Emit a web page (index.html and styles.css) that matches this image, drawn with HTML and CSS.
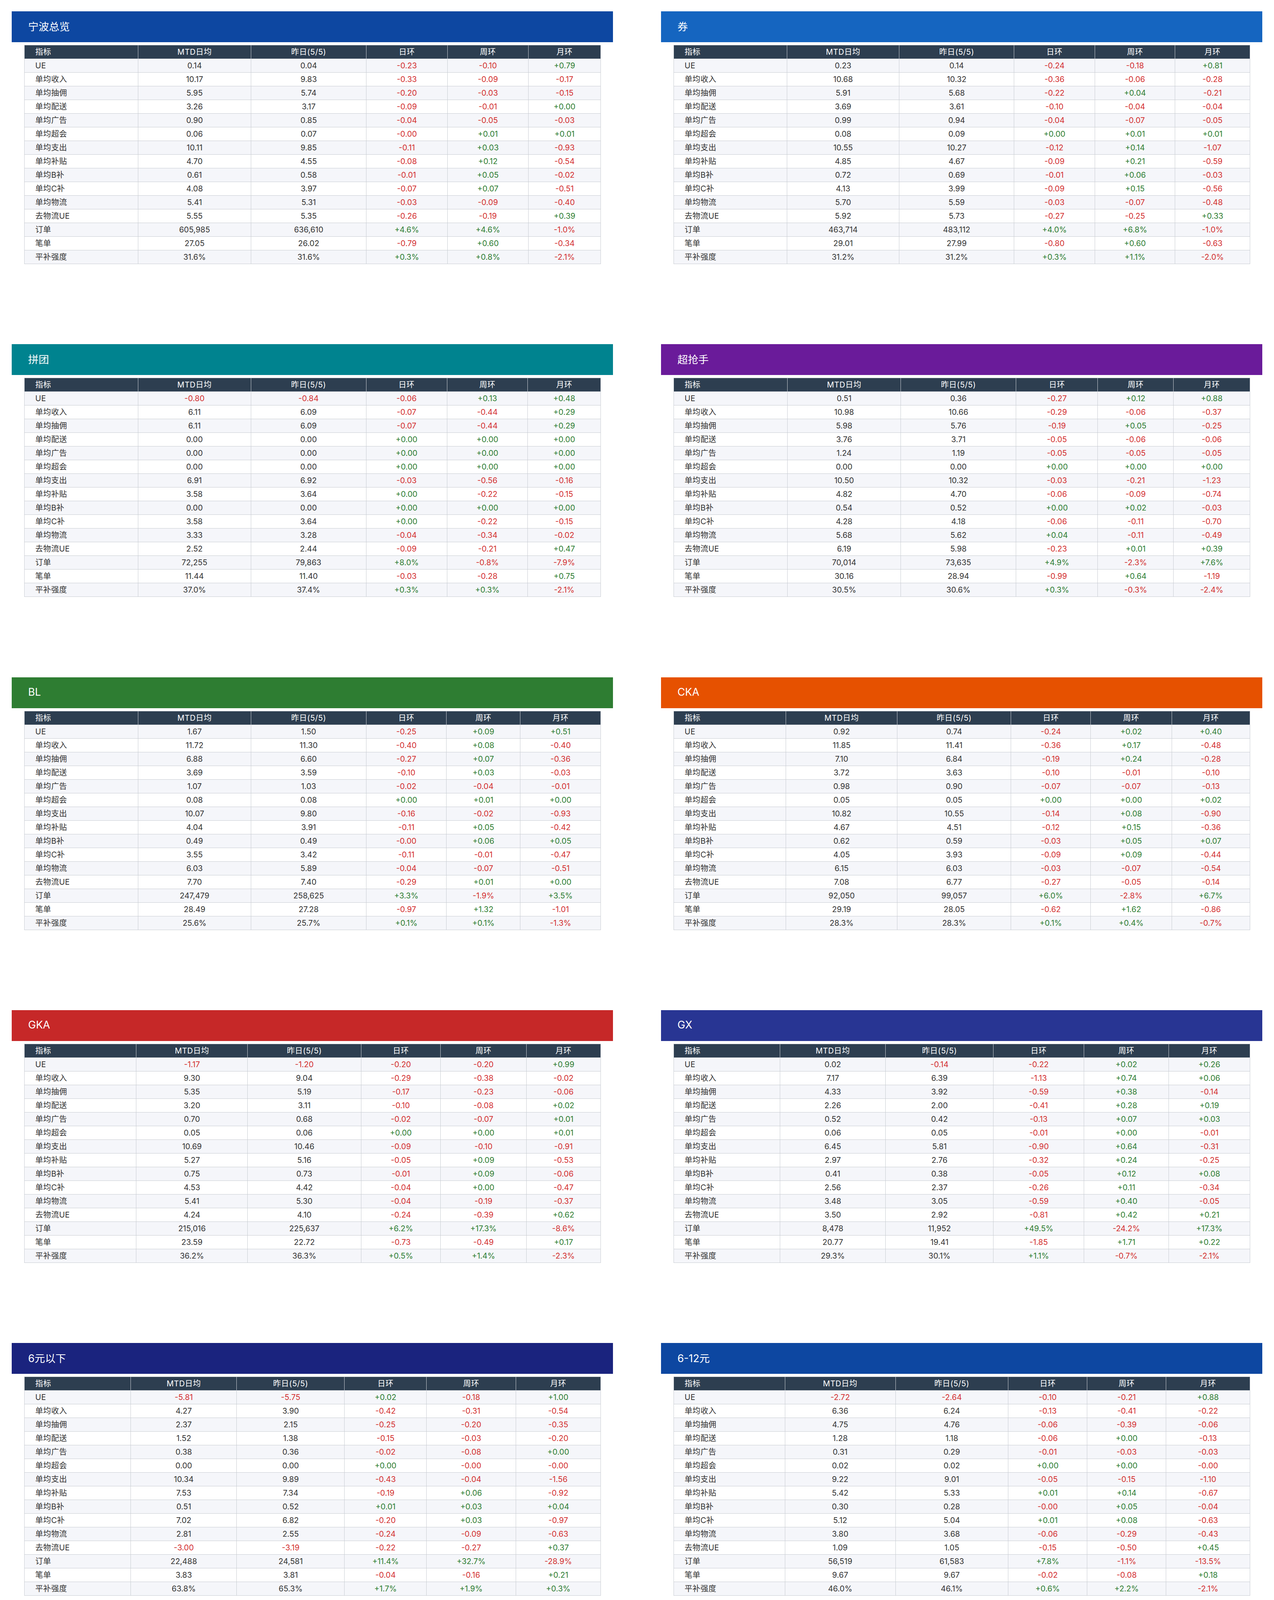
FILE: index.html
```html
<!DOCTYPE html>
<html lang="zh-CN">
<head>
<meta charset="utf-8">
<title>宁波 UE 日报</title>
<link rel="stylesheet" href="styles.css">
</head>
<body>
<main class="grid">

<section class="card">
<h2 class="card-title t-blue9">宁波总览</h2>
<table class="metrics">
<thead><tr><th>指标</th><th>MTD日均</th><th>昨日(5/5)</th><th>日环</th><th>周环</th><th>月环</th></tr></thead>
<tbody>
<tr><td>UE</td><td>0.14</td><td>0.04</td><td class="dn">-0.23</td><td class="dn">-0.10</td><td class="up">+0.79</td></tr>
<tr><td>单均收入</td><td>10.17</td><td>9.83</td><td class="dn">-0.33</td><td class="dn">-0.09</td><td class="dn">-0.17</td></tr>
<tr><td>单均抽佣</td><td>5.95</td><td>5.74</td><td class="dn">-0.20</td><td class="dn">-0.03</td><td class="dn">-0.15</td></tr>
<tr><td>单均配送</td><td>3.26</td><td>3.17</td><td class="dn">-0.09</td><td class="dn">-0.01</td><td class="up">+0.00</td></tr>
<tr><td>单均广告</td><td>0.90</td><td>0.85</td><td class="dn">-0.04</td><td class="dn">-0.05</td><td class="dn">-0.03</td></tr>
<tr><td>单均超会</td><td>0.06</td><td>0.07</td><td class="dn">-0.00</td><td class="up">+0.01</td><td class="up">+0.01</td></tr>
<tr><td>单均支出</td><td>10.11</td><td>9.85</td><td class="dn">-0.11</td><td class="up">+0.03</td><td class="dn">-0.93</td></tr>
<tr><td>单均补贴</td><td>4.70</td><td>4.55</td><td class="dn">-0.08</td><td class="up">+0.12</td><td class="dn">-0.54</td></tr>
<tr><td>单均B补</td><td>0.61</td><td>0.58</td><td class="dn">-0.01</td><td class="up">+0.05</td><td class="dn">-0.02</td></tr>
<tr><td>单均C补</td><td>4.08</td><td>3.97</td><td class="dn">-0.07</td><td class="up">+0.07</td><td class="dn">-0.51</td></tr>
<tr><td>单均物流</td><td>5.41</td><td>5.31</td><td class="dn">-0.03</td><td class="dn">-0.09</td><td class="dn">-0.40</td></tr>
<tr><td>去物流UE</td><td>5.55</td><td>5.35</td><td class="dn">-0.26</td><td class="dn">-0.19</td><td class="up">+0.39</td></tr>
<tr><td>订单</td><td>605,985</td><td>636,610</td><td class="up">+4.6%</td><td class="up">+4.6%</td><td class="dn">-1.0%</td></tr>
<tr><td>笔单</td><td>27.05</td><td>26.02</td><td class="dn">-0.79</td><td class="up">+0.60</td><td class="dn">-0.34</td></tr>
<tr><td>平补强度</td><td>31.6%</td><td>31.6%</td><td class="up">+0.3%</td><td class="up">+0.8%</td><td class="dn">-2.1%</td></tr>
</tbody>
</table>
</section>

<section class="card">
<h2 class="card-title t-blue8">券</h2>
<table class="metrics">
<thead><tr><th>指标</th><th>MTD日均</th><th>昨日(5/5)</th><th>日环</th><th>周环</th><th>月环</th></tr></thead>
<tbody>
<tr><td>UE</td><td>0.23</td><td>0.14</td><td class="dn">-0.24</td><td class="dn">-0.18</td><td class="up">+0.81</td></tr>
<tr><td>单均收入</td><td>10.68</td><td>10.32</td><td class="dn">-0.36</td><td class="dn">-0.06</td><td class="dn">-0.28</td></tr>
<tr><td>单均抽佣</td><td>5.91</td><td>5.68</td><td class="dn">-0.22</td><td class="up">+0.04</td><td class="dn">-0.21</td></tr>
<tr><td>单均配送</td><td>3.69</td><td>3.61</td><td class="dn">-0.10</td><td class="dn">-0.04</td><td class="dn">-0.04</td></tr>
<tr><td>单均广告</td><td>0.99</td><td>0.94</td><td class="dn">-0.04</td><td class="dn">-0.07</td><td class="dn">-0.05</td></tr>
<tr><td>单均超会</td><td>0.08</td><td>0.09</td><td class="up">+0.00</td><td class="up">+0.01</td><td class="up">+0.01</td></tr>
<tr><td>单均支出</td><td>10.55</td><td>10.27</td><td class="dn">-0.12</td><td class="up">+0.14</td><td class="dn">-1.07</td></tr>
<tr><td>单均补贴</td><td>4.85</td><td>4.67</td><td class="dn">-0.09</td><td class="up">+0.21</td><td class="dn">-0.59</td></tr>
<tr><td>单均B补</td><td>0.72</td><td>0.69</td><td class="dn">-0.01</td><td class="up">+0.06</td><td class="dn">-0.03</td></tr>
<tr><td>单均C补</td><td>4.13</td><td>3.99</td><td class="dn">-0.09</td><td class="up">+0.15</td><td class="dn">-0.56</td></tr>
<tr><td>单均物流</td><td>5.70</td><td>5.59</td><td class="dn">-0.03</td><td class="dn">-0.07</td><td class="dn">-0.48</td></tr>
<tr><td>去物流UE</td><td>5.92</td><td>5.73</td><td class="dn">-0.27</td><td class="dn">-0.25</td><td class="up">+0.33</td></tr>
<tr><td>订单</td><td>463,714</td><td>483,112</td><td class="up">+4.0%</td><td class="up">+6.8%</td><td class="dn">-1.0%</td></tr>
<tr><td>笔单</td><td>29.01</td><td>27.99</td><td class="dn">-0.80</td><td class="up">+0.60</td><td class="dn">-0.63</td></tr>
<tr><td>平补强度</td><td>31.2%</td><td>31.2%</td><td class="up">+0.3%</td><td class="up">+1.1%</td><td class="dn">-2.0%</td></tr>
</tbody>
</table>
</section>

<section class="card">
<h2 class="card-title t-cyan8">拼团</h2>
<table class="metrics">
<thead><tr><th>指标</th><th>MTD日均</th><th>昨日(5/5)</th><th>日环</th><th>周环</th><th>月环</th></tr></thead>
<tbody>
<tr><td>UE</td><td class="dn">-0.80</td><td class="dn">-0.84</td><td class="dn">-0.06</td><td class="up">+0.13</td><td class="up">+0.48</td></tr>
<tr><td>单均收入</td><td>6.11</td><td>6.09</td><td class="dn">-0.07</td><td class="dn">-0.44</td><td class="up">+0.29</td></tr>
<tr><td>单均抽佣</td><td>6.11</td><td>6.09</td><td class="dn">-0.07</td><td class="dn">-0.44</td><td class="up">+0.29</td></tr>
<tr><td>单均配送</td><td>0.00</td><td>0.00</td><td class="up">+0.00</td><td class="up">+0.00</td><td class="up">+0.00</td></tr>
<tr><td>单均广告</td><td>0.00</td><td>0.00</td><td class="up">+0.00</td><td class="up">+0.00</td><td class="up">+0.00</td></tr>
<tr><td>单均超会</td><td>0.00</td><td>0.00</td><td class="up">+0.00</td><td class="up">+0.00</td><td class="up">+0.00</td></tr>
<tr><td>单均支出</td><td>6.91</td><td>6.92</td><td class="dn">-0.03</td><td class="dn">-0.56</td><td class="dn">-0.16</td></tr>
<tr><td>单均补贴</td><td>3.58</td><td>3.64</td><td class="up">+0.00</td><td class="dn">-0.22</td><td class="dn">-0.15</td></tr>
<tr><td>单均B补</td><td>0.00</td><td>0.00</td><td class="up">+0.00</td><td class="up">+0.00</td><td class="up">+0.00</td></tr>
<tr><td>单均C补</td><td>3.58</td><td>3.64</td><td class="up">+0.00</td><td class="dn">-0.22</td><td class="dn">-0.15</td></tr>
<tr><td>单均物流</td><td>3.33</td><td>3.28</td><td class="dn">-0.04</td><td class="dn">-0.34</td><td class="dn">-0.02</td></tr>
<tr><td>去物流UE</td><td>2.52</td><td>2.44</td><td class="dn">-0.09</td><td class="dn">-0.21</td><td class="up">+0.47</td></tr>
<tr><td>订单</td><td>72,255</td><td>79,863</td><td class="up">+8.0%</td><td class="dn">-0.8%</td><td class="dn">-7.9%</td></tr>
<tr><td>笔单</td><td>11.44</td><td>11.40</td><td class="dn">-0.03</td><td class="dn">-0.28</td><td class="up">+0.75</td></tr>
<tr><td>平补强度</td><td>37.0%</td><td>37.4%</td><td class="up">+0.3%</td><td class="up">+0.3%</td><td class="dn">-2.1%</td></tr>
</tbody>
</table>
</section>

<section class="card">
<h2 class="card-title t-purple8">超抢手</h2>
<table class="metrics">
<thead><tr><th>指标</th><th>MTD日均</th><th>昨日(5/5)</th><th>日环</th><th>周环</th><th>月环</th></tr></thead>
<tbody>
<tr><td>UE</td><td>0.51</td><td>0.36</td><td class="dn">-0.27</td><td class="up">+0.12</td><td class="up">+0.88</td></tr>
<tr><td>单均收入</td><td>10.98</td><td>10.66</td><td class="dn">-0.29</td><td class="dn">-0.06</td><td class="dn">-0.37</td></tr>
<tr><td>单均抽佣</td><td>5.98</td><td>5.76</td><td class="dn">-0.19</td><td class="up">+0.05</td><td class="dn">-0.25</td></tr>
<tr><td>单均配送</td><td>3.76</td><td>3.71</td><td class="dn">-0.05</td><td class="dn">-0.06</td><td class="dn">-0.06</td></tr>
<tr><td>单均广告</td><td>1.24</td><td>1.19</td><td class="dn">-0.05</td><td class="dn">-0.05</td><td class="dn">-0.05</td></tr>
<tr><td>单均超会</td><td>0.00</td><td>0.00</td><td class="up">+0.00</td><td class="up">+0.00</td><td class="up">+0.00</td></tr>
<tr><td>单均支出</td><td>10.50</td><td>10.32</td><td class="dn">-0.03</td><td class="dn">-0.21</td><td class="dn">-1.23</td></tr>
<tr><td>单均补贴</td><td>4.82</td><td>4.70</td><td class="dn">-0.06</td><td class="dn">-0.09</td><td class="dn">-0.74</td></tr>
<tr><td>单均B补</td><td>0.54</td><td>0.52</td><td class="up">+0.00</td><td class="up">+0.02</td><td class="dn">-0.03</td></tr>
<tr><td>单均C补</td><td>4.28</td><td>4.18</td><td class="dn">-0.06</td><td class="dn">-0.11</td><td class="dn">-0.70</td></tr>
<tr><td>单均物流</td><td>5.68</td><td>5.62</td><td class="up">+0.04</td><td class="dn">-0.11</td><td class="dn">-0.49</td></tr>
<tr><td>去物流UE</td><td>6.19</td><td>5.98</td><td class="dn">-0.23</td><td class="up">+0.01</td><td class="up">+0.39</td></tr>
<tr><td>订单</td><td>70,014</td><td>73,635</td><td class="up">+4.9%</td><td class="dn">-2.3%</td><td class="up">+7.6%</td></tr>
<tr><td>笔单</td><td>30.16</td><td>28.94</td><td class="dn">-0.99</td><td class="up">+0.64</td><td class="dn">-1.19</td></tr>
<tr><td>平补强度</td><td>30.5%</td><td>30.6%</td><td class="up">+0.3%</td><td class="dn">-0.3%</td><td class="dn">-2.4%</td></tr>
</tbody>
</table>
</section>

<section class="card">
<h2 class="card-title t-green8">BL</h2>
<table class="metrics">
<thead><tr><th>指标</th><th>MTD日均</th><th>昨日(5/5)</th><th>日环</th><th>周环</th><th>月环</th></tr></thead>
<tbody>
<tr><td>UE</td><td>1.67</td><td>1.50</td><td class="dn">-0.25</td><td class="up">+0.09</td><td class="up">+0.51</td></tr>
<tr><td>单均收入</td><td>11.72</td><td>11.30</td><td class="dn">-0.40</td><td class="up">+0.08</td><td class="dn">-0.40</td></tr>
<tr><td>单均抽佣</td><td>6.88</td><td>6.60</td><td class="dn">-0.27</td><td class="up">+0.07</td><td class="dn">-0.36</td></tr>
<tr><td>单均配送</td><td>3.69</td><td>3.59</td><td class="dn">-0.10</td><td class="up">+0.03</td><td class="dn">-0.03</td></tr>
<tr><td>单均广告</td><td>1.07</td><td>1.03</td><td class="dn">-0.02</td><td class="dn">-0.04</td><td class="dn">-0.01</td></tr>
<tr><td>单均超会</td><td>0.08</td><td>0.08</td><td class="up">+0.00</td><td class="up">+0.01</td><td class="up">+0.00</td></tr>
<tr><td>单均支出</td><td>10.07</td><td>9.80</td><td class="dn">-0.16</td><td class="dn">-0.02</td><td class="dn">-0.93</td></tr>
<tr><td>单均补贴</td><td>4.04</td><td>3.91</td><td class="dn">-0.11</td><td class="up">+0.05</td><td class="dn">-0.42</td></tr>
<tr><td>单均B补</td><td>0.49</td><td>0.49</td><td class="dn">-0.00</td><td class="up">+0.06</td><td class="up">+0.05</td></tr>
<tr><td>单均C补</td><td>3.55</td><td>3.42</td><td class="dn">-0.11</td><td class="dn">-0.01</td><td class="dn">-0.47</td></tr>
<tr><td>单均物流</td><td>6.03</td><td>5.89</td><td class="dn">-0.04</td><td class="dn">-0.07</td><td class="dn">-0.51</td></tr>
<tr><td>去物流UE</td><td>7.70</td><td>7.40</td><td class="dn">-0.29</td><td class="up">+0.01</td><td class="up">+0.00</td></tr>
<tr><td>订单</td><td>247,479</td><td>258,625</td><td class="up">+3.3%</td><td class="dn">-1.9%</td><td class="up">+3.5%</td></tr>
<tr><td>笔单</td><td>28.49</td><td>27.28</td><td class="dn">-0.97</td><td class="up">+1.32</td><td class="dn">-1.01</td></tr>
<tr><td>平补强度</td><td>25.6%</td><td>25.7%</td><td class="up">+0.1%</td><td class="up">+0.1%</td><td class="dn">-1.3%</td></tr>
</tbody>
</table>
</section>

<section class="card">
<h2 class="card-title t-orange9">CKA</h2>
<table class="metrics">
<thead><tr><th>指标</th><th>MTD日均</th><th>昨日(5/5)</th><th>日环</th><th>周环</th><th>月环</th></tr></thead>
<tbody>
<tr><td>UE</td><td>0.92</td><td>0.74</td><td class="dn">-0.24</td><td class="up">+0.02</td><td class="up">+0.40</td></tr>
<tr><td>单均收入</td><td>11.85</td><td>11.41</td><td class="dn">-0.36</td><td class="up">+0.17</td><td class="dn">-0.48</td></tr>
<tr><td>单均抽佣</td><td>7.10</td><td>6.84</td><td class="dn">-0.19</td><td class="up">+0.24</td><td class="dn">-0.28</td></tr>
<tr><td>单均配送</td><td>3.72</td><td>3.63</td><td class="dn">-0.10</td><td class="dn">-0.01</td><td class="dn">-0.10</td></tr>
<tr><td>单均广告</td><td>0.98</td><td>0.90</td><td class="dn">-0.07</td><td class="dn">-0.07</td><td class="dn">-0.13</td></tr>
<tr><td>单均超会</td><td>0.05</td><td>0.05</td><td class="up">+0.00</td><td class="up">+0.00</td><td class="up">+0.02</td></tr>
<tr><td>单均支出</td><td>10.82</td><td>10.55</td><td class="dn">-0.14</td><td class="up">+0.08</td><td class="dn">-0.90</td></tr>
<tr><td>单均补贴</td><td>4.67</td><td>4.51</td><td class="dn">-0.12</td><td class="up">+0.15</td><td class="dn">-0.36</td></tr>
<tr><td>单均B补</td><td>0.62</td><td>0.59</td><td class="dn">-0.03</td><td class="up">+0.05</td><td class="up">+0.07</td></tr>
<tr><td>单均C补</td><td>4.05</td><td>3.93</td><td class="dn">-0.09</td><td class="up">+0.09</td><td class="dn">-0.44</td></tr>
<tr><td>单均物流</td><td>6.15</td><td>6.03</td><td class="dn">-0.03</td><td class="dn">-0.07</td><td class="dn">-0.54</td></tr>
<tr><td>去物流UE</td><td>7.08</td><td>6.77</td><td class="dn">-0.27</td><td class="dn">-0.05</td><td class="dn">-0.14</td></tr>
<tr><td>订单</td><td>92,050</td><td>99,057</td><td class="up">+6.0%</td><td class="dn">-2.8%</td><td class="up">+6.7%</td></tr>
<tr><td>笔单</td><td>29.19</td><td>28.05</td><td class="dn">-0.62</td><td class="up">+1.62</td><td class="dn">-0.86</td></tr>
<tr><td>平补强度</td><td>28.3%</td><td>28.3%</td><td class="up">+0.1%</td><td class="up">+0.4%</td><td class="dn">-0.7%</td></tr>
</tbody>
</table>
</section>

<section class="card">
<h2 class="card-title t-red8">GKA</h2>
<table class="metrics">
<thead><tr><th>指标</th><th>MTD日均</th><th>昨日(5/5)</th><th>日环</th><th>周环</th><th>月环</th></tr></thead>
<tbody>
<tr><td>UE</td><td class="dn">-1.17</td><td class="dn">-1.20</td><td class="dn">-0.20</td><td class="dn">-0.20</td><td class="up">+0.99</td></tr>
<tr><td>单均收入</td><td>9.30</td><td>9.04</td><td class="dn">-0.29</td><td class="dn">-0.38</td><td class="dn">-0.02</td></tr>
<tr><td>单均抽佣</td><td>5.35</td><td>5.19</td><td class="dn">-0.17</td><td class="dn">-0.23</td><td class="dn">-0.06</td></tr>
<tr><td>单均配送</td><td>3.20</td><td>3.11</td><td class="dn">-0.10</td><td class="dn">-0.08</td><td class="up">+0.02</td></tr>
<tr><td>单均广告</td><td>0.70</td><td>0.68</td><td class="dn">-0.02</td><td class="dn">-0.07</td><td class="up">+0.01</td></tr>
<tr><td>单均超会</td><td>0.05</td><td>0.06</td><td class="up">+0.00</td><td class="up">+0.00</td><td class="up">+0.01</td></tr>
<tr><td>单均支出</td><td>10.69</td><td>10.46</td><td class="dn">-0.09</td><td class="dn">-0.10</td><td class="dn">-0.91</td></tr>
<tr><td>单均补贴</td><td>5.27</td><td>5.16</td><td class="dn">-0.05</td><td class="up">+0.09</td><td class="dn">-0.53</td></tr>
<tr><td>单均B补</td><td>0.75</td><td>0.73</td><td class="dn">-0.01</td><td class="up">+0.09</td><td class="dn">-0.06</td></tr>
<tr><td>单均C补</td><td>4.53</td><td>4.42</td><td class="dn">-0.04</td><td class="up">+0.00</td><td class="dn">-0.47</td></tr>
<tr><td>单均物流</td><td>5.41</td><td>5.30</td><td class="dn">-0.04</td><td class="dn">-0.19</td><td class="dn">-0.37</td></tr>
<tr><td>去物流UE</td><td>4.24</td><td>4.10</td><td class="dn">-0.24</td><td class="dn">-0.39</td><td class="up">+0.62</td></tr>
<tr><td>订单</td><td>215,016</td><td>225,637</td><td class="up">+6.2%</td><td class="up">+17.3%</td><td class="dn">-8.6%</td></tr>
<tr><td>笔单</td><td>23.59</td><td>22.72</td><td class="dn">-0.73</td><td class="dn">-0.49</td><td class="up">+0.17</td></tr>
<tr><td>平补强度</td><td>36.2%</td><td>36.3%</td><td class="up">+0.5%</td><td class="up">+1.4%</td><td class="dn">-2.3%</td></tr>
</tbody>
</table>
</section>

<section class="card">
<h2 class="card-title t-indigo8">GX</h2>
<table class="metrics">
<thead><tr><th>指标</th><th>MTD日均</th><th>昨日(5/5)</th><th>日环</th><th>周环</th><th>月环</th></tr></thead>
<tbody>
<tr><td>UE</td><td>0.02</td><td class="dn">-0.14</td><td class="dn">-0.22</td><td class="up">+0.02</td><td class="up">+0.26</td></tr>
<tr><td>单均收入</td><td>7.17</td><td>6.39</td><td class="dn">-1.13</td><td class="up">+0.74</td><td class="up">+0.06</td></tr>
<tr><td>单均抽佣</td><td>4.33</td><td>3.92</td><td class="dn">-0.59</td><td class="up">+0.38</td><td class="dn">-0.14</td></tr>
<tr><td>单均配送</td><td>2.26</td><td>2.00</td><td class="dn">-0.41</td><td class="up">+0.28</td><td class="up">+0.19</td></tr>
<tr><td>单均广告</td><td>0.52</td><td>0.42</td><td class="dn">-0.13</td><td class="up">+0.07</td><td class="up">+0.03</td></tr>
<tr><td>单均超会</td><td>0.06</td><td>0.05</td><td class="dn">-0.01</td><td class="up">+0.00</td><td class="dn">-0.01</td></tr>
<tr><td>单均支出</td><td>6.45</td><td>5.81</td><td class="dn">-0.90</td><td class="up">+0.64</td><td class="dn">-0.31</td></tr>
<tr><td>单均补贴</td><td>2.97</td><td>2.76</td><td class="dn">-0.32</td><td class="up">+0.24</td><td class="dn">-0.25</td></tr>
<tr><td>单均B补</td><td>0.41</td><td>0.38</td><td class="dn">-0.05</td><td class="up">+0.12</td><td class="up">+0.08</td></tr>
<tr><td>单均C补</td><td>2.56</td><td>2.37</td><td class="dn">-0.26</td><td class="up">+0.11</td><td class="dn">-0.34</td></tr>
<tr><td>单均物流</td><td>3.48</td><td>3.05</td><td class="dn">-0.59</td><td class="up">+0.40</td><td class="dn">-0.05</td></tr>
<tr><td>去物流UE</td><td>3.50</td><td>2.92</td><td class="dn">-0.81</td><td class="up">+0.42</td><td class="up">+0.21</td></tr>
<tr><td>订单</td><td>8,478</td><td>11,952</td><td class="up">+49.5%</td><td class="dn">-24.2%</td><td class="up">+17.3%</td></tr>
<tr><td>笔单</td><td>20.77</td><td>19.41</td><td class="dn">-1.85</td><td class="up">+1.71</td><td class="up">+0.22</td></tr>
<tr><td>平补强度</td><td>29.3%</td><td>30.1%</td><td class="up">+1.1%</td><td class="dn">-0.7%</td><td class="dn">-2.1%</td></tr>
</tbody>
</table>
</section>

<section class="card">
<h2 class="card-title t-indigo9">6元以下</h2>
<table class="metrics">
<thead><tr><th>指标</th><th>MTD日均</th><th>昨日(5/5)</th><th>日环</th><th>周环</th><th>月环</th></tr></thead>
<tbody>
<tr><td>UE</td><td class="dn">-5.81</td><td class="dn">-5.75</td><td class="up">+0.02</td><td class="dn">-0.18</td><td class="up">+1.00</td></tr>
<tr><td>单均收入</td><td>4.27</td><td>3.90</td><td class="dn">-0.42</td><td class="dn">-0.31</td><td class="dn">-0.54</td></tr>
<tr><td>单均抽佣</td><td>2.37</td><td>2.15</td><td class="dn">-0.25</td><td class="dn">-0.20</td><td class="dn">-0.35</td></tr>
<tr><td>单均配送</td><td>1.52</td><td>1.38</td><td class="dn">-0.15</td><td class="dn">-0.03</td><td class="dn">-0.20</td></tr>
<tr><td>单均广告</td><td>0.38</td><td>0.36</td><td class="dn">-0.02</td><td class="dn">-0.08</td><td class="up">+0.00</td></tr>
<tr><td>单均超会</td><td>0.00</td><td>0.00</td><td class="up">+0.00</td><td class="dn">-0.00</td><td class="dn">-0.00</td></tr>
<tr><td>单均支出</td><td>10.34</td><td>9.89</td><td class="dn">-0.43</td><td class="dn">-0.04</td><td class="dn">-1.56</td></tr>
<tr><td>单均补贴</td><td>7.53</td><td>7.34</td><td class="dn">-0.19</td><td class="up">+0.06</td><td class="dn">-0.92</td></tr>
<tr><td>单均B补</td><td>0.51</td><td>0.52</td><td class="up">+0.01</td><td class="up">+0.03</td><td class="up">+0.04</td></tr>
<tr><td>单均C补</td><td>7.02</td><td>6.82</td><td class="dn">-0.20</td><td class="up">+0.03</td><td class="dn">-0.97</td></tr>
<tr><td>单均物流</td><td>2.81</td><td>2.55</td><td class="dn">-0.24</td><td class="dn">-0.09</td><td class="dn">-0.63</td></tr>
<tr><td>去物流UE</td><td class="dn">-3.00</td><td class="dn">-3.19</td><td class="dn">-0.22</td><td class="dn">-0.27</td><td class="up">+0.37</td></tr>
<tr><td>订单</td><td>22,488</td><td>24,581</td><td class="up">+11.4%</td><td class="up">+32.7%</td><td class="dn">-28.9%</td></tr>
<tr><td>笔单</td><td>3.83</td><td>3.81</td><td class="dn">-0.04</td><td class="dn">-0.16</td><td class="up">+0.21</td></tr>
<tr><td>平补强度</td><td>63.8%</td><td>65.3%</td><td class="up">+1.7%</td><td class="up">+1.9%</td><td class="up">+0.3%</td></tr>
</tbody>
</table>
</section>

<section class="card">
<h2 class="card-title t-blue9">6-12元</h2>
<table class="metrics">
<thead><tr><th>指标</th><th>MTD日均</th><th>昨日(5/5)</th><th>日环</th><th>周环</th><th>月环</th></tr></thead>
<tbody>
<tr><td>UE</td><td class="dn">-2.72</td><td class="dn">-2.64</td><td class="dn">-0.10</td><td class="dn">-0.21</td><td class="up">+0.88</td></tr>
<tr><td>单均收入</td><td>6.36</td><td>6.24</td><td class="dn">-0.13</td><td class="dn">-0.41</td><td class="dn">-0.22</td></tr>
<tr><td>单均抽佣</td><td>4.75</td><td>4.76</td><td class="dn">-0.06</td><td class="dn">-0.39</td><td class="dn">-0.06</td></tr>
<tr><td>单均配送</td><td>1.28</td><td>1.18</td><td class="dn">-0.06</td><td class="up">+0.00</td><td class="dn">-0.13</td></tr>
<tr><td>单均广告</td><td>0.31</td><td>0.29</td><td class="dn">-0.01</td><td class="dn">-0.03</td><td class="dn">-0.03</td></tr>
<tr><td>单均超会</td><td>0.02</td><td>0.02</td><td class="up">+0.00</td><td class="up">+0.00</td><td class="dn">-0.00</td></tr>
<tr><td>单均支出</td><td>9.22</td><td>9.01</td><td class="dn">-0.05</td><td class="dn">-0.15</td><td class="dn">-1.10</td></tr>
<tr><td>单均补贴</td><td>5.42</td><td>5.33</td><td class="up">+0.01</td><td class="up">+0.14</td><td class="dn">-0.67</td></tr>
<tr><td>单均B补</td><td>0.30</td><td>0.28</td><td class="dn">-0.00</td><td class="up">+0.05</td><td class="dn">-0.04</td></tr>
<tr><td>单均C补</td><td>5.12</td><td>5.04</td><td class="up">+0.01</td><td class="up">+0.08</td><td class="dn">-0.63</td></tr>
<tr><td>单均物流</td><td>3.80</td><td>3.68</td><td class="dn">-0.06</td><td class="dn">-0.29</td><td class="dn">-0.43</td></tr>
<tr><td>去物流UE</td><td>1.09</td><td>1.05</td><td class="dn">-0.15</td><td class="dn">-0.50</td><td class="up">+0.45</td></tr>
<tr><td>订单</td><td>56,519</td><td>61,583</td><td class="up">+7.8%</td><td class="dn">-1.1%</td><td class="dn">-13.5%</td></tr>
<tr><td>笔单</td><td>9.67</td><td>9.67</td><td class="dn">-0.02</td><td class="dn">-0.08</td><td class="up">+0.18</td></tr>
<tr><td>平补强度</td><td>46.0%</td><td>46.1%</td><td class="up">+0.6%</td><td class="up">+2.2%</td><td class="dn">-2.1%</td></tr>
</tbody>
</table>
</section>

<section class="card">
<h2 class="card-title t-lblue9">12-15元</h2>
<table class="metrics">
<thead><tr><th>指标</th><th>MTD日均</th><th>昨日(5/5)</th><th>日环</th><th>周环</th><th>月环</th></tr></thead>
<tbody>
<tr><td>UE</td><td class="dn">-0.92</td><td class="dn">-0.88</td><td class="dn">-0.09</td><td class="dn">-0.04</td><td class="up">+0.81</td></tr>
<tr><td>单均收入</td><td>7.90</td><td>7.78</td><td class="dn">-0.14</td><td class="up">+0.23</td><td class="dn">-0.09</td></tr>
<tr><td>单均抽佣</td><td>5.07</td><td>5.04</td><td class="dn">-0.06</td><td class="up">+0.11</td><td class="dn">-0.01</td></tr>
<tr><td>单均配送</td><td>2.24</td><td>2.18</td><td class="dn">-0.06</td><td class="up">+0.16</td><td class="dn">-0.03</td></tr>
<tr><td>单均广告</td><td>0.51</td><td>0.49</td><td class="dn">-0.02</td><td class="dn">-0.06</td><td class="dn">-0.04</td></tr>
<tr><td>单均超会</td><td>0.07</td><td>0.07</td><td class="up">+0.00</td><td class="up">+0.01</td><td class="dn">-0.01</td></tr>
<tr><td>单均支出</td><td>9.04</td><td>8.88</td><td class="dn">-0.07</td><td class="up">+0.36</td><td class="dn">-0.89</td></tr>
<tr><td>单均补贴</td><td>4.01</td><td>3.93</td><td class="dn">-0.04</td><td class="up">+0.16</td><td class="dn">-0.48</td></tr>
<tr><td>单均B补</td><td>0.41</td><td>0.40</td><td class="dn">-0.01</td><td class="up">+0.12</td><td class="dn">-0.02</td></tr>
<tr><td>单均C补</td><td>3.59</td><td>3.53</td><td class="dn">-0.03</td><td class="up">+0.04</td><td class="dn">-0.46</td></tr>
<tr><td>单均物流</td><td>5.03</td><td>4.94</td><td class="dn">-0.03</td><td class="up">+0.20</td><td class="dn">-0.41</td></tr>
<tr><td>去物流UE</td><td>4.11</td><td>4.06</td><td class="dn">-0.12</td><td class="up">+0.16</td><td class="up">+0.40</td></tr>
<tr><td>订单</td><td>70,799</td><td>76,859</td><td class="up">+6.8%</td><td class="up">+0.0%</td><td class="up">+3.6%</td></tr>
<tr><td>笔单</td><td>13.80</td><td>13.79</td><td class="dn">-0.00</td><td class="up">+0.01</td><td class="dn">-0.02</td></tr>
<tr><td>平补强度</td><td>33.7%</td><td>33.6%</td><td class="up">+0.2%</td><td class="up">+0.3%</td><td class="dn">-2.3%</td></tr>
</tbody>
</table>
</section>

<section class="card">
<h2 class="card-title t-cyan9">15-20元</h2>
<table class="metrics">
<thead><tr><th>指标</th><th>MTD日均</th><th>昨日(5/5)</th><th>日环</th><th>周环</th><th>月环</th></tr></thead>
<tbody>
<tr><td>UE</td><td class="dn">-0.20</td><td class="dn">-0.20</td><td class="dn">-0.12</td><td class="up">+0.00</td><td class="up">+0.66</td></tr>
<tr><td>单均收入</td><td>8.62</td><td>8.46</td><td class="dn">-0.17</td><td class="dn">-0.29</td><td class="dn">-0.19</td></tr>
<tr><td>单均抽佣</td><td>4.42</td><td>4.35</td><td class="dn">-0.07</td><td class="dn">-0.12</td><td class="dn">-0.09</td></tr>
<tr><td>单均配送</td><td>3.32</td><td>3.26</td><td class="dn">-0.08</td><td class="dn">-0.08</td><td class="dn">-0.06</td></tr>
<tr><td>单均广告</td><td>0.80</td><td>0.77</td><td class="dn">-0.01</td><td class="dn">-0.10</td><td class="dn">-0.05</td></tr>
<tr><td>单均超会</td><td>0.09</td><td>0.09</td><td class="dn">-0.00</td><td class="up">+0.00</td><td class="up">+0.01</td></tr>
<tr><td>单均支出</td><td>9.02</td><td>8.86</td><td class="dn">-0.07</td><td class="dn">-0.25</td><td class="dn">-0.88</td></tr>
<tr><td>单均补贴</td><td>3.51</td><td>3.43</td><td class="dn">-0.06</td><td class="dn">-0.04</td><td class="dn">-0.35</td></tr>
<tr><td>单均B补</td><td>0.54</td><td>0.54</td><td class="dn">-0.00</td><td class="up">+0.07</td><td class="dn">-0.01</td></tr>
<tr><td>单均C补</td><td>2.96</td><td>2.89</td><td class="dn">-0.05</td><td class="dn">-0.11</td><td class="dn">-0.34</td></tr>
<tr><td>单均物流</td><td>5.51</td><td>5.43</td><td class="dn">-0.01</td><td class="dn">-0.21</td><td class="dn">-0.53</td></tr>
<tr><td>去物流UE</td><td>5.31</td><td>5.23</td><td class="dn">-0.13</td><td class="dn">-0.21</td><td class="up">+0.13</td></tr>
<tr><td>订单</td><td>132,513</td><td>143,565</td><td class="up">+6.4%</td><td class="up">+2.8%</td><td class="up">+9.5%</td></tr>
<tr><td>笔单</td><td>17.60</td><td>17.60</td><td class="dn">-0.00</td><td class="up">+0.04</td><td class="up">+0.01</td></tr>
<tr><td>平补强度</td><td>28.9%</td><td>28.8%</td><td class="up">+0.1%</td><td class="up">+0.5%</td><td class="dn">-1.5%</td></tr>
</tbody>
</table>
</section>

<section class="card">
<h2 class="card-title t-teal9">20-25元</h2>
<table class="metrics">
<thead><tr><th>指标</th><th>MTD日均</th><th>昨日(5/5)</th><th>日环</th><th>周环</th><th>月环</th></tr></thead>
<tbody>
<tr><td>UE</td><td>0.33</td><td>0.32</td><td class="dn">-0.15</td><td class="dn">-0.05</td><td class="up">+0.67</td></tr>
<tr><td>单均收入</td><td>10.02</td><td>9.87</td><td class="dn">-0.16</td><td class="dn">-0.14</td><td class="dn">-0.13</td></tr>
<tr><td>单均抽佣</td><td>4.98</td><td>4.92</td><td class="dn">-0.07</td><td class="dn">-0.05</td><td class="dn">-0.07</td></tr>
<tr><td>单均配送</td><td>4.00</td><td>3.94</td><td class="dn">-0.08</td><td class="dn">-0.02</td><td class="dn">-0.01</td></tr>
<tr><td>单均广告</td><td>0.97</td><td>0.94</td><td class="dn">-0.02</td><td class="dn">-0.07</td><td class="dn">-0.06</td></tr>
<tr><td>单均超会</td><td>0.07</td><td>0.07</td><td class="up">+0.00</td><td class="up">+0.00</td><td class="up">+0.02</td></tr>
<tr><td>单均支出</td><td>9.85</td><td>9.69</td><td class="dn">-0.02</td><td class="dn">-0.08</td><td class="dn">-0.83</td></tr>
<tr><td>单均补贴</td><td>3.80</td><td>3.72</td><td class="dn">-0.04</td><td class="up">+0.00</td><td class="dn">-0.36</td></tr>
<tr><td>单均B补</td><td>0.67</td><td>0.67</td><td class="dn">-0.00</td><td class="up">+0.09</td><td class="up">+0.04</td></tr>
<tr><td>单均C补</td><td>3.13</td><td>3.05</td><td class="dn">-0.03</td><td class="dn">-0.09</td><td class="dn">-0.40</td></tr>
<tr><td>单均物流</td><td>6.05</td><td>5.98</td><td class="up">+0.01</td><td class="dn">-0.08</td><td class="dn">-0.47</td></tr>
<tr><td>去物流UE</td><td>6.38</td><td>6.30</td><td class="dn">-0.14</td><td class="dn">-0.14</td><td class="up">+0.20</td></tr>
<tr><td>订单</td><td>98,640</td><td>105,150</td><td class="up">+6.0%</td><td class="up">+0.0%</td><td class="up">+4.3%</td></tr>
<tr><td>笔单</td><td>22.51</td><td>22.51</td><td class="dn">-0.01</td><td class="dn">-0.01</td><td class="dn">-0.01</td></tr>
<tr><td>平补强度</td><td>27.5%</td><td>27.4%</td><td class="up">+0.1%</td><td class="up">+0.3%</td><td class="dn">-1.6%</td></tr>
</tbody>
</table>
</section>

<section class="card">
<h2 class="card-title t-green9">25-30元</h2>
<table class="metrics">
<thead><tr><th>指标</th><th>MTD日均</th><th>昨日(5/5)</th><th>日环</th><th>周环</th><th>月环</th></tr></thead>
<tbody>
<tr><td>UE</td><td>0.70</td><td>0.71</td><td class="dn">-0.15</td><td class="dn">-0.02</td><td class="up">+0.80</td></tr>
<tr><td>单均收入</td><td>10.88</td><td>10.73</td><td class="dn">-0.18</td><td class="dn">-0.03</td><td class="dn">-0.04</td></tr>
<tr><td>单均抽佣</td><td>5.71</td><td>5.63</td><td class="dn">-0.09</td><td class="dn">-0.01</td><td class="dn">-0.04</td></tr>
<tr><td>单均配送</td><td>4.07</td><td>4.01</td><td class="dn">-0.08</td><td class="dn">-0.01</td><td class="dn">-0.01</td></tr>
<tr><td>单均广告</td><td>1.03</td><td>1.02</td><td class="dn">-0.02</td><td class="dn">-0.04</td><td class="dn">-0.01</td></tr>
<tr><td>单均超会</td><td>0.07</td><td>0.07</td><td class="up">+0.01</td><td class="up">+0.02</td><td class="up">+0.02</td></tr>
<tr><td>单均支出</td><td>10.32</td><td>10.15</td><td class="dn">-0.05</td><td class="up">+0.00</td><td class="dn">-0.86</td></tr>
<tr><td>单均补贴</td><td>4.28</td><td>4.18</td><td class="dn">-0.07</td><td class="up">+0.01</td><td class="dn">-0.41</td></tr>
<tr><td>单均B补</td><td>0.69</td><td>0.66</td><td class="dn">-0.01</td><td class="up">+0.03</td><td class="dn">-0.04</td></tr>
<tr><td>单均C补</td><td>3.60</td><td>3.53</td><td class="dn">-0.06</td><td class="dn">-0.02</td><td class="dn">-0.37</td></tr>
<tr><td>单均物流</td><td>6.04</td><td>5.97</td><td class="up">+0.02</td><td class="dn">-0.00</td><td class="dn">-0.45</td></tr>
<tr><td>去物流UE</td><td>6.74</td><td>6.67</td><td class="dn">-0.13</td><td class="dn">-0.02</td><td class="up">+0.35</td></tr>
<tr><td>订单</td><td>67,230</td><td>70,373</td><td class="up">+4.2%</td><td class="up">+1.3%</td><td class="up">+1.7%</td></tr>
<tr><td>笔单</td><td>27.39</td><td>27.37</td><td class="dn">-0.01</td><td class="up">+0.04</td><td class="dn">-0.01</td></tr>
<tr><td>平补强度</td><td>28.3%</td><td>28.1%</td><td class="up">+0.0%</td><td class="up">+0.1%</td><td class="dn">-1.8%</td></tr>
</tbody>
</table>
</section>

<section class="card">
<h2 class="card-title t-lgreen9">大于30元</h2>
<table class="metrics">
<thead><tr><th>指标</th><th>MTD日均</th><th>昨日(5/5)</th><th>日环</th><th>周环</th><th>月环</th></tr></thead>
<tbody>
<tr><td>UE</td><td>2.41</td><td>2.23</td><td class="dn">-0.34</td><td class="dn">-0.28</td><td class="up">+0.45</td></tr>
<tr><td>单均收入</td><td>14.48</td><td>14.05</td><td class="dn">-0.44</td><td class="dn">-0.13</td><td class="dn">-0.43</td></tr>
<tr><td>单均抽佣</td><td>9.27</td><td>8.96</td><td class="dn">-0.30</td><td class="dn">-0.04</td><td class="dn">-0.34</td></tr>
<tr><td>单均配送</td><td>3.80</td><td>3.75</td><td class="dn">-0.07</td><td class="dn">-0.07</td><td class="dn">-0.04</td></tr>
<tr><td>单均广告</td><td>1.35</td><td>1.27</td><td class="dn">-0.06</td><td class="dn">-0.04</td><td class="dn">-0.04</td></tr>
<tr><td>单均超会</td><td>0.06</td><td>0.06</td><td class="dn">-0.01</td><td class="up">+0.01</td><td class="dn">-0.00</td></tr>
<tr><td>单均支出</td><td>11.85</td><td>11.57</td><td class="dn">-0.11</td><td class="up">+0.12</td><td class="dn">-0.76</td></tr>
<tr><td>单均补贴</td><td>6.07</td><td>5.87</td><td class="dn">-0.11</td><td class="up">+0.16</td><td class="dn">-0.34</td></tr>
<tr><td>单均B补</td><td>0.82</td><td>0.75</td><td class="dn">-0.00</td><td class="dn">-0.04</td><td class="dn">-0.09</td></tr>
<tr><td>单均C补</td><td>5.25</td><td>5.12</td><td class="dn">-0.11</td><td class="up">+0.20</td><td class="dn">-0.25</td></tr>
<tr><td>单均物流</td><td>5.78</td><td>5.70</td><td class="dn">-0.00</td><td class="dn">-0.04</td><td class="dn">-0.42</td></tr>
<tr><td>去物流UE</td><td>8.19</td><td>7.93</td><td class="dn">-0.34</td><td class="dn">-0.32</td><td class="up">+0.03</td></tr>
<tr><td>订单</td><td>157,798</td><td>154,499</td><td class="dn">-0.9%</td><td class="up">+13.2%</td><td class="dn">-4.6%</td></tr>
<tr><td>笔单</td><td>53.14</td><td>51.74</td><td class="dn">-1.06</td><td class="up">+0.42</td><td class="dn">-1.67</td></tr>
<tr><td>平补强度</td><td>29.5%</td><td>29.5%</td><td class="up">+0.3%</td><td class="up">+0.8%</td><td class="dn">-0.5%</td></tr>
</tbody>
</table>
</section>

</main>
</body>
</html>
```

FILE: styles.css
```css
html, body {
  margin: 0;
  background: #ffffff;
}

body {
  padding: 29px 30px 0;
  font-family: Inter, "Noto Sans CJK SC", sans-serif;
  color: #333333;
}

.grid {
  display: grid;
  grid-template-columns: 1539px 1539px;
  column-gap: 123px;
  row-gap: 205.3px;
  align-items: start;
}

.card {
  display: flex;
  flex-direction: column;
}

.card-title {
  margin: 0;
  height: 79px;
  box-sizing: border-box;
  padding: 0 42px 4px;
  display: flex;
  align-items: center;
  font-size: 26.7px;
  font-weight: 400;
  color: #ffffff;
}

.t-blue9 { background: #0d47a1; }
.t-blue8 { background: #1565c0; }
.t-cyan8 { background: #00838f; }
.t-cyan9 { background: #006064; }
.t-purple8 { background: #6a1b9a; }
.t-green8 { background: #2e7d32; }
.t-green9 { background: #1b5e20; }
.t-lgreen9 { background: #33691e; }
.t-orange9 { background: #e65100; }
.t-red8 { background: #c62828; }
.t-indigo8 { background: #283593; }
.t-indigo9 { background: #1a237e; }
.t-lblue9 { background: #01579b; }
.t-teal9 { background: #004d40; }

.metrics {
  margin: 7px 31px 0 32px;
  border-collapse: collapse;
  font-size: 20px;
  color: #333333;
}

.metrics th,
.metrics td {
  border: 1px solid #c8ccd2;
  padding: 0;
  height: 34px;
  line-height: 34px;
  white-space: nowrap;
  text-align: center;
  font-weight: 400;
}

.metrics th {
  background: #2d3e50;
  color: #ffffff;
  letter-spacing: 0.5px;
}

.metrics th:first-child,
.metrics td:first-child {
  text-align: left;
  padding-left: 1.85%;
  letter-spacing: 0.3px;
}

.metrics tbody tr:nth-child(odd) td {
  background: #f5f6fa;
}

.metrics tbody tr:nth-child(even) td {
  background: #ffffff;
}

.metrics td.up { color: #2e7d32; }
.metrics td.dn { color: #d32f2f; }
```
